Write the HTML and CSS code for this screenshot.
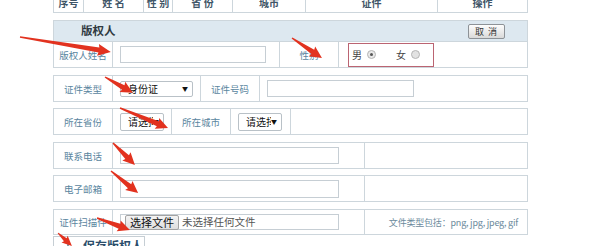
FILE: index.html
```html
<!DOCTYPE html>
<html>
<head>
<meta charset="utf-8">
<link rel="stylesheet" href="styles.css">
</head>
<body>
<div class="page">
  <div class="thead">
    <div class="th c1">序号</div>
    <div class="th c2">姓 名</div>
    <div class="th c3">性 别</div>
    <div class="th c4">省 份</div>
    <div class="th c5">城市</div>
    <div class="th c6">证件</div>
    <div class="th c7">操作</div>
  </div>

  <div class="panel-head">
    <span class="panel-title">版权人</span>
    <span class="btn-cancel">取 消</span>
  </div>

  <div class="row first">
    <div class="cell label">版权人姓名</div>
    <div class="cell w167"><span class="input in-name"></span></div>
    <div class="cell label">性别</div>
    <div class="cell grow">
      <span class="radio-box">
        <span class="rtxt">男</span><span class="radio on"></span>
        <span class="rtxt rtxt2">女</span><span class="radio"></span>
      </span>
    </div>
  </div>

  <div class="row gap7">
    <div class="cell label">证件类型</div>
    <div class="cell w88"><span class="select sel-id"><span class="stext">身份证</span><span class="sarrow">▼</span></span></div>
    <div class="cell label">证件号码</div>
    <div class="cell grow"><span class="input in-idno"></span></div>
  </div>

  <div class="row gap6">
    <div class="cell label">所在省份</div>
    <div class="cell w59"><span class="select sel-small"><span class="stext clip">请选择</span><span class="sarrow">▼</span></span></div>
    <div class="cell label">所在城市</div>
    <div class="cell w60"><span class="select sel-small"><span class="stext clip">请选择</span><span class="sarrow">▼</span></span></div>
    <div class="cell grow"></div>
  </div>

  <div class="row gap7">
    <div class="cell label">联系电话</div>
    <div class="cell w252"><span class="input in-wide"></span></div>
    <div class="cell grow"></div>
  </div>

  <div class="row gap6">
    <div class="cell label">电子邮箱</div>
    <div class="cell w252"><span class="input in-wide in-mail"></span></div>
    <div class="cell grow"></div>
  </div>

  <div class="row gap7 last">
    <div class="cell label">证件扫描件</div>
    <div class="cell w252">
      <span class="file-box"><span class="file-btn">选择文件</span><span class="file-none">未选择任何文件</span></span>
    </div>
    <div class="cell grow note">文件类型包括：png, jpg, jpeg, gif</div>
  </div>

  <div class="save-btn"><span class="save-ico"></span><span class="save-text">保存版权人</span></div>
</div>

<svg class="arrows" width="600" height="246" viewBox="0 0 600 246">
  <g fill="#e2321f">
    <polygon transform="translate(20 37) rotate(9.36)" points="0,-0.7 80,-2.6 79,-6 92,0 79,6 80,2.6 0,0.7"/>
    <polygon transform="translate(292 38) rotate(33.7)" points="0,-0.7 25,-2.6 24,-5.8 36,0 24,5.8 25,2.6 0,0.7"/>
    <polygon transform="translate(105 77) rotate(29.7)" points="0,-0.7 21,-2.6 20,-5.8 32,0 20,5.8 21,2.6 0,0.7"/>
    <polygon transform="translate(120 108) rotate(22.6)" points="0,-0.7 41,-2.6 40,-5.8 52,0 40,5.8 41,2.6 0,0.7"/>
    <polygon transform="translate(113 143) rotate(45)" points="0,-0.7 20,-2.6 19,-5.8 31,0 19,5.8 20,2.6 0,0.7"/>
    <polygon transform="translate(111 171) rotate(39.2)" points="0,-0.7 24,-2.6 23,-5.8 35,0 23,5.8 24,2.6 0,0.7"/>
    <polygon transform="translate(97 218) rotate(20)" points="0,-0.7 24,-2.6 23,-5.8 35,0 23,5.8 24,2.6 0,0.7"/>
    <polygon transform="translate(58 233) rotate(42.9)" points="0,-0.5 10,-2 9,-4.5 19,0 9,4.5 10,2 0,0.5"/>
  </g>
</svg>
</body>
</html>
```

FILE: styles.css
```css
html, body {
  margin: 0;
  padding: 0;
  background: #ffffff;
}
body {
  position: relative;
  width: 600px;
  height: 246px;
  overflow: hidden;
  font-family: "Noto Sans CJK SC", "DejaVu Sans", sans-serif;
}
.page {
  margin-left: 53px;
  width: 475px;
}

/* top header table */
.thead {
  display: flex;
  box-sizing: border-box;
  height: 21px;
  margin-top: -8px;
  border-left: 1px solid #cdd6dc;
  border-bottom: 1px solid #cdd6dc;
}
.th {
  box-sizing: border-box;
  border-right: 1px solid #cdd6dc;
  display: flex;
  align-items: center;
  justify-content: center;
  font-size: 10px;
  font-weight: bold;
  color: #3f5668;
  white-space: pre;
}
.c1 { width: 30px; }
.c2 { width: 60px; }
.c3 { width: 29px; }
.c4 { width: 60px; }
.c5 { width: 73px; }
.c6 { width: 132px; }
.c7 { width: 90px; }

/* panel header */
.panel-head {
  box-sizing: border-box;
  margin-top: 7px;
  height: 21px;
  border: 1px solid #cdd6dc;
  border-bottom: none;
  background: #dde8f0;
  display: flex;
  align-items: center;
  justify-content: space-between;
  padding: 0 22px 0 27px;
}
.panel-title {
  font-size: 11.5px;
  font-weight: bold;
  color: #2f3a42;
  line-height: 1;
}
.btn-cancel {
  box-sizing: border-box;
  width: 37px;
  height: 15px;
  border: 1px solid #8d9297;
  border-radius: 2px;
  background: linear-gradient(#fdfdfd, #d9d9d9);
  font-size: 9px;
  letter-spacing: 1px;
  white-space: pre;
  color: #333;
  display: flex;
  align-items: center;
  justify-content: center;
  line-height: 1;
}

/* rows */
.row {
  box-sizing: border-box;
  display: flex;
  height: 27px;
  border: 1px solid #cdd6dc;
}
.row.gap7 { margin-top: 7px; }
.row.gap6 { margin-top: 6px; }
.row.last { height: 26px; }

.cell {
  box-sizing: border-box;
  border-right: 1px solid #cdd6dc;
  display: flex;
  align-items: center;
  padding-left: 7px;
}
.cell.grow {
  flex: 1;
  border-right: none;
}
.cell.label {
  width: 59px;
  padding-left: 0;
  justify-content: center;
  font-size: 9.5px;
  color: #5a86a0;
  white-space: nowrap;
}
.w167 { width: 167px; }
.w88 { width: 88px; }
.w59 { width: 59px; }
.w60 { width: 60px; }
.w252 { width: 252px; }

.input {
  box-sizing: border-box;
  display: block;
  height: 17px;
  border: 1px solid #c6ced4;
  background: #fff;
}
.in-name { width: 146px; }
.in-idno { width: 147px; }
.in-wide { width: 219px; }
.in-mail { height: 18px; }

/* selects */
.select {
  box-sizing: border-box;
  display: flex;
  align-items: center;
  height: 16px;
  border: 1px solid #b9c1c7;
  border-radius: 2px;
  background: #fff;
  position: relative;
  overflow: hidden;
  padding-left: 7px;
}
.sel-id { width: 73px; }
.sel-small { width: 44px; height: 18px; }
.stext {
  font-size: 10px;
  color: #111;
  white-space: nowrap;
  line-height: 1;
}
.stext.clip {
  width: 25px;
  overflow: hidden;
}
.sarrow {
  position: absolute;
  right: 4px;
  top: 50%;
  transform: translateY(-50%);
  font-size: 6px;
  color: #111;
  line-height: 1;
}

/* radio group */
.radio-box {
  box-sizing: border-box;
  display: flex;
  align-items: center;
  margin-left: 2px;
  width: 86px;
  height: 24px;
  border: 1px solid #bb6472;
  padding-left: 3px;
}
.rtxt {
  font-size: 10px;
  color: #444;
  line-height: 1;
}
.rtxt2 { margin-left: 20px; }
.radio {
  box-sizing: border-box;
  width: 9px;
  height: 9px;
  border-radius: 50%;
  border: 1px solid #b5b5b5;
  background: #e2e2e2;
  margin-left: 5px;
  position: relative;
}
.radio.on {
  background: #e8e8e8;
}
.radio.on::after {
  content: "";
  position: absolute;
  left: 2px;
  top: 2px;
  width: 3px;
  height: 3px;
  border-radius: 50%;
  background: #555;
}

/* file input */
.file-box {
  box-sizing: border-box;
  display: flex;
  align-items: center;
  width: 219px;
  height: 16px;
  border: 1px solid #c6ced4;
  padding-left: 4px;
}
.file-btn {
  box-sizing: border-box;
  height: 15px;
  width: 54px;
  border: 1px solid #a3a3a3;
  border-radius: 2px;
  background: linear-gradient(#f4f4f4, #dedede);
  font-size: 11px;
  color: #111;
  display: flex;
  align-items: center;
  justify-content: center;
  line-height: 1;
}
.file-none {
  margin-left: 3px;
  font-size: 10.5px;
  color: #555;
  line-height: 1;
  white-space: nowrap;
}
.note {
  justify-content: flex-end;
  padding-right: 9px;
  font-size: 9px;
  color: #6b8a9c;
  white-space: nowrap;
  letter-spacing: -0.2px;
}

/* save button */
.save-btn {
  box-sizing: border-box;
  margin-top: 1px;
  width: 92px;
  height: 20px;
  border: 1px solid #c6ced4;
  background: #fff;
  display: flex;
  align-items: flex-start;
  padding: 3px 0 0 10px;
}
.save-ico {
  width: 8px;
  height: 8px;
  margin-top: 3px;
  position: relative;
}
.save-ico::before {
  content: "";
  position: absolute;
  left: 3px;
  top: 0;
  width: 2px;
  height: 8px;
  background: #8a9aa6;
}
.save-ico::after {
  content: "";
  position: absolute;
  left: 0;
  top: 3px;
  width: 8px;
  height: 2px;
  background: #8a9aa6;
}
.save-text {
  margin-left: 11px;
  font-size: 12px;
  font-weight: bold;
  color: #2c4e6b;
  line-height: 1;
}

.arrows {
  position: absolute;
  left: 0;
  top: 0;
  pointer-events: none;
}
```
